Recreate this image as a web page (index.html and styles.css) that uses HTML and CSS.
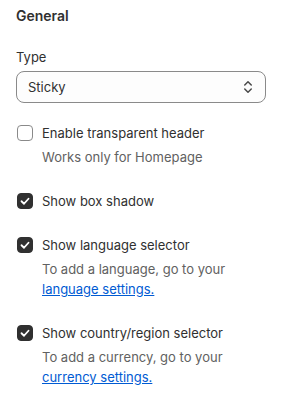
FILE: index.html
```html
<!DOCTYPE html>
<html>
<head>
<meta charset="utf-8">
<link rel="stylesheet" href="styles.css">
</head>
<body>
<div class="panel">
  <h2 class="heading">General</h2>
  <div class="field">
    <label class="label">Type</label>
    <div class="select">
      <span class="select-value">Sticky</span>
      <svg class="select-icon" viewBox="0 0 20 20" width="20" height="20"><path d="M6.75 8 10 4.75 13.25 8M6.75 12 10 15.25 13.25 12" fill="none" stroke="#4a4a4a" stroke-width="1.5" stroke-linecap="round" stroke-linejoin="round"/></svg>
    </div>
  </div>
  <div class="options">
    <div class="option">
      <div class="row"><span class="box"></span><span class="text">Enable transparent header</span></div>
      <div class="help">Works only for Homepage</div>
    </div>
    <div class="option">
      <div class="row"><span class="box checked"><svg viewBox="0 0 16 16" width="16" height="16"><path d="M4.5 8.25 7 10.75 11.5 5.75" fill="none" stroke="#fff" stroke-width="1.8" stroke-linecap="round" stroke-linejoin="round"/></svg></span><span class="text">Show box shadow</span></div>
    </div>
    <div class="option">
      <div class="row"><span class="box checked"><svg viewBox="0 0 16 16" width="16" height="16"><path d="M4.5 8.25 7 10.75 11.5 5.75" fill="none" stroke="#fff" stroke-width="1.8" stroke-linecap="round" stroke-linejoin="round"/></svg></span><span class="text">Show language selector</span></div>
      <div class="help">To add a language, go to your <a href="#">language settings.</a></div>
    </div>
    <div class="option">
      <div class="row"><span class="box checked"><svg viewBox="0 0 16 16" width="16" height="16"><path d="M4.5 8.25 7 10.75 11.5 5.75" fill="none" stroke="#fff" stroke-width="1.8" stroke-linecap="round" stroke-linejoin="round"/></svg></span><span class="text">Show country/region selector</span></div>
      <div class="help">To add a currency, go to your <a href="#">currency settings.</a></div>
    </div>
  </div>
</div>
</body>
</html>
```
FILE: styles.css
```css
html, body {
  margin: 0;
  padding: 0;
  background: #ffffff;
}
body {
  font-family: Inter, "Liberation Sans", sans-serif;
  font-size: 13px;
  line-height: 20px;
  color: #303030;
}
.panel {
  padding: 6px 16px 0 16px;
}
.heading {
  margin: 0;
  font-size: 14px;
  font-weight: 600;
  line-height: 20px;
  color: #303030;
}
.field {
  margin-top: 21px;
  display: flex;
  flex-direction: column;
  gap: 4px;
}
.label {
  display: block;
  line-height: 20px;
}
.select {
  box-sizing: border-box;
  height: 32px;
  border: 1px solid #8a8a8a;
  border-radius: 8px;
  background: #fdfdfd;
  display: flex;
  align-items: center;
  padding: 0 7px 0 11px;
}
.select-value {
  flex: 1;
}
.select-icon {
  display: block;
}
.options {
  margin-top: 20px;
  display: flex;
  flex-direction: column;
  gap: 24px;
}
.option {
  display: flex;
  flex-direction: column;
  gap: 4px;
}
.row {
  display: flex;
  align-items: center;
  gap: 9px;
  height: 20px;
}
.box {
  box-sizing: border-box;
  width: 16px;
  height: 16px;
  margin-left: 1px;
  border: 1px solid #8a8a8a;
  border-radius: 4px;
  background: #fff;
  flex: none;
}
.box.checked {
  background: #303030;
  border-color: #303030;
  position: relative;
}
.box.checked svg {
  position: absolute;
  left: -1px;
  top: -1px;
}
.help {
  padding-left: 26px;
  color: #616161;
}
.help a {
  color: #005bd3;
  text-decoration: underline;
}
```
